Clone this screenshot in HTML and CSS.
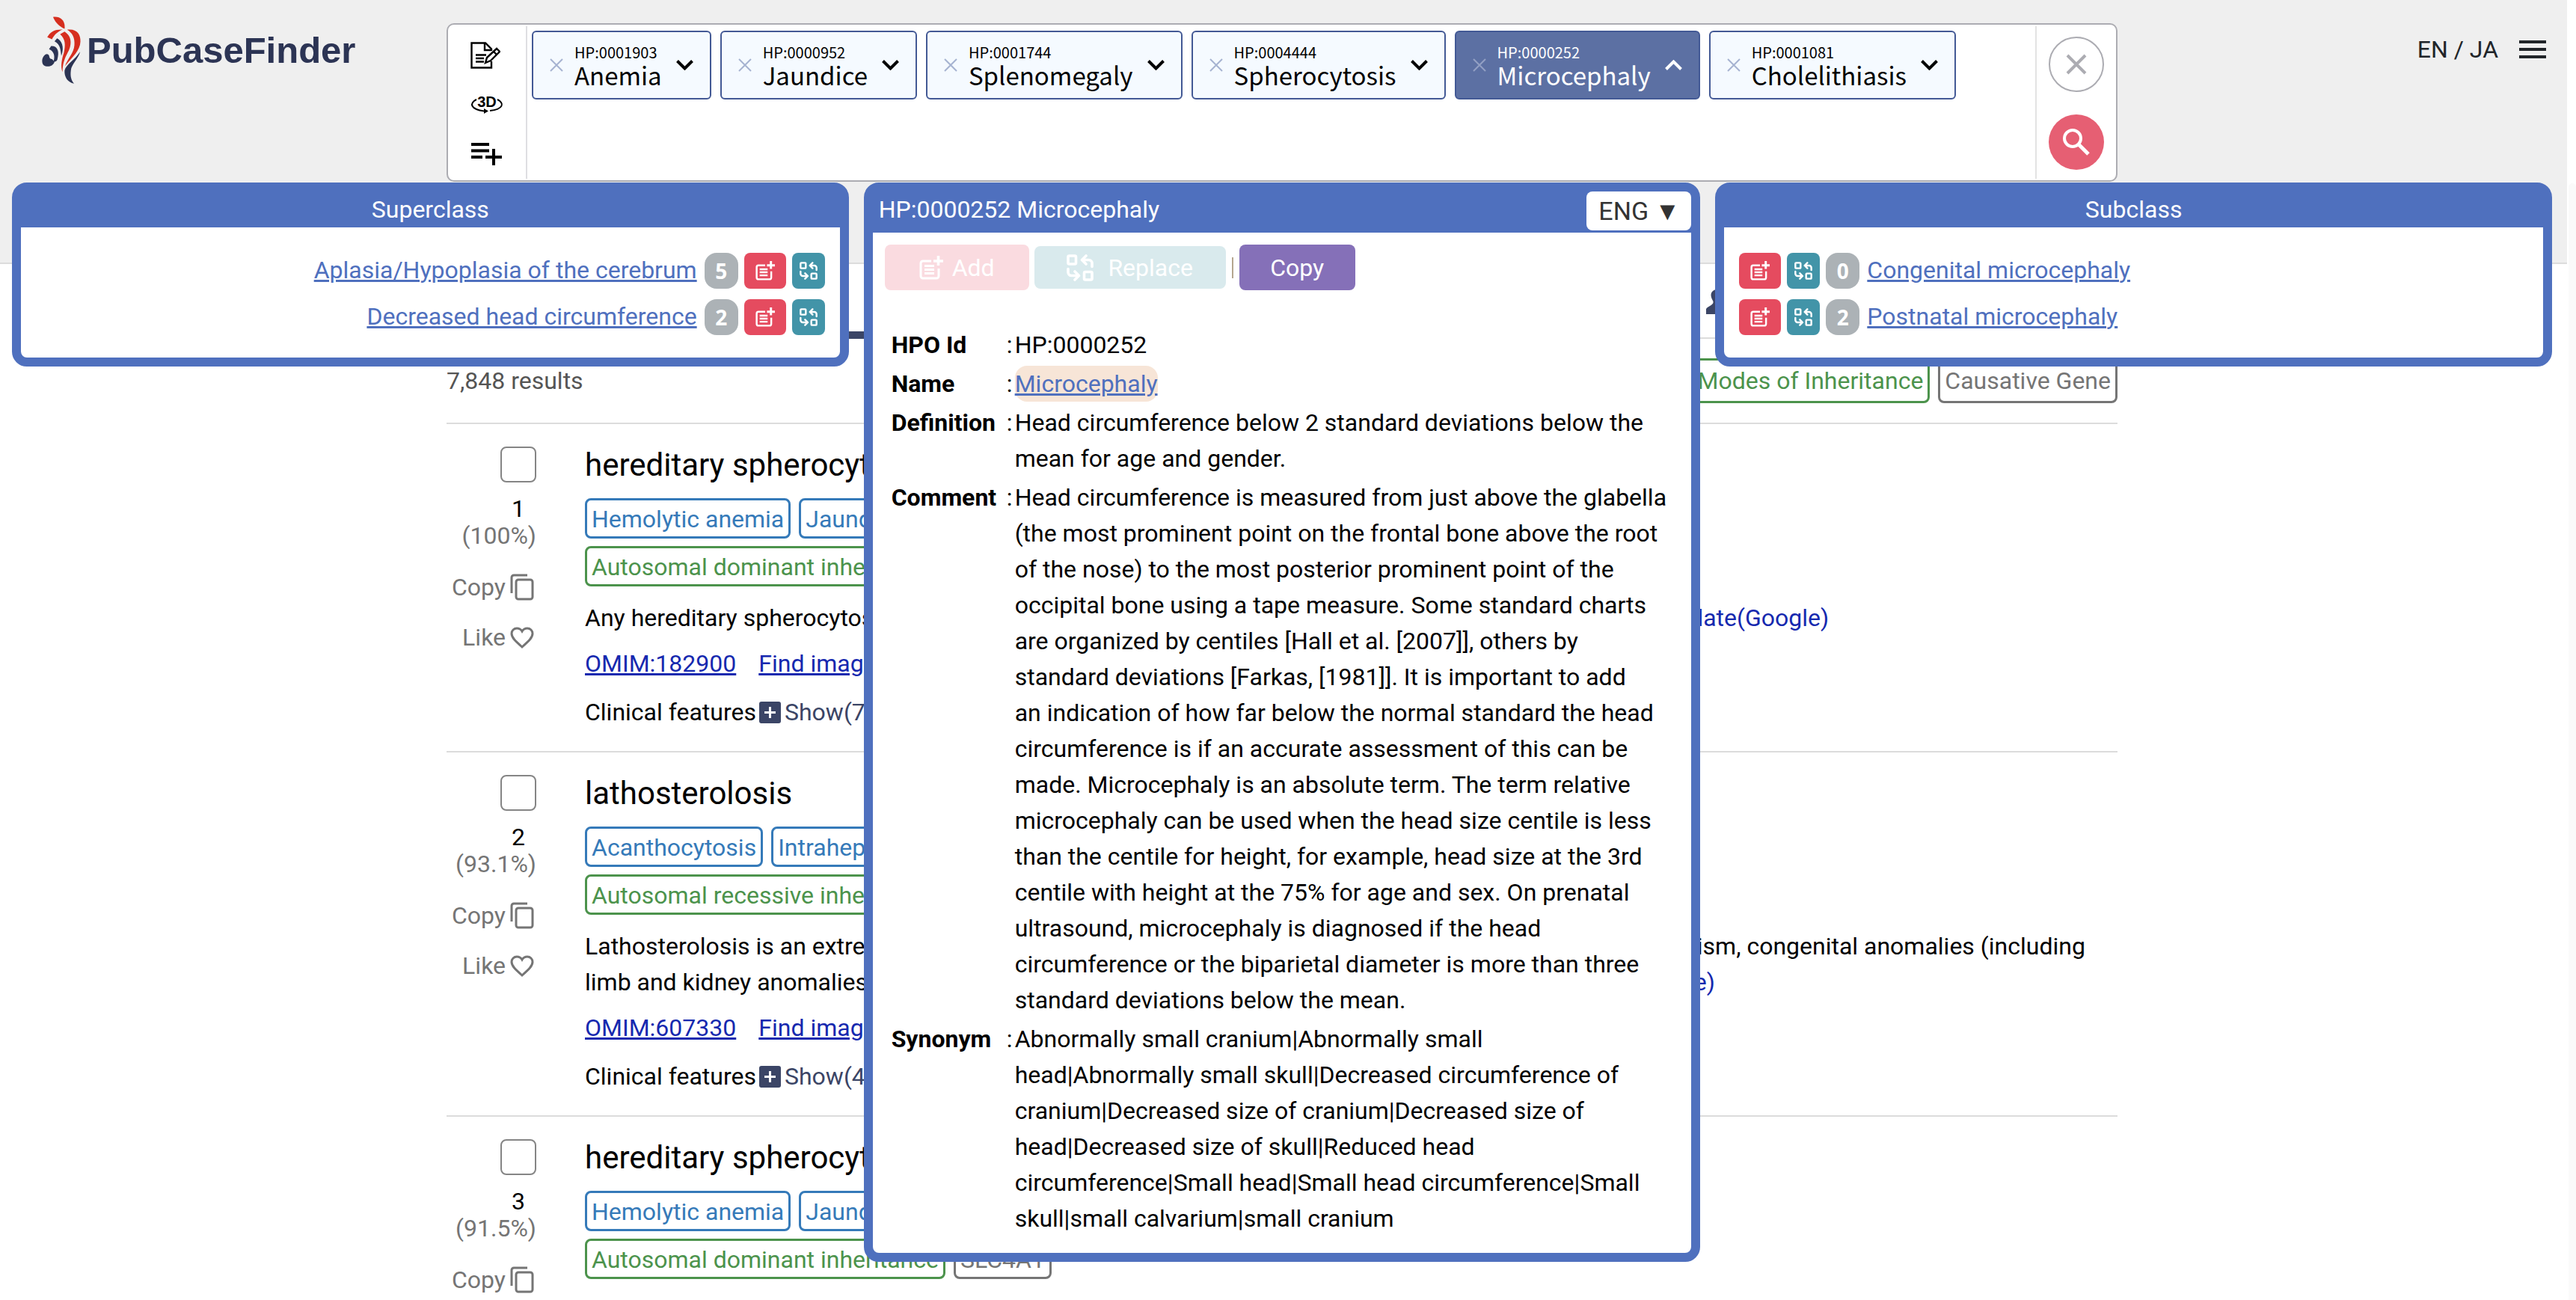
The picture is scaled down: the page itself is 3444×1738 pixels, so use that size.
FILE: index.html
```html
<!DOCTYPE html>
<html lang="en">
<head>
<meta charset="utf-8">
<title>PubCaseFinder</title>
<link rel="stylesheet" href="styles.css">
</head>
<body>
<svg class="sprite" aria-hidden="true">
  <symbol id="i-x" viewBox="0 0 18 18"><path d="M1 1l16 16M17 1L1 17" fill="none" stroke="currentColor" stroke-width="2"/></symbol>
  <symbol id="i-down" viewBox="0 0 23 14"><path d="M1.500 1.500l10 10 10-10" fill="none" stroke="currentColor" stroke-width="4"/></symbol>
  <symbol id="i-up" viewBox="0 0 23 14"><path d="M1.500 12.500l10-10 10 10" fill="none" stroke="currentColor" stroke-width="4"/></symbol>
  <symbol id="i-add" viewBox="0 0 32 32"><path d="M16 7H5a3 3 0 0 0-3 3v17a3 3 0 0 0 3 3h18a3 3 0 0 0 3-3V17" fill="none" stroke="currentColor" stroke-width="3"/><path d="M25.500 0v13M19 7h13" fill="none" stroke="currentColor" stroke-width="3.600"/><path d="M7 13.500h13M7 18.500h13M7 23.500h13" fill="none" stroke="currentColor" stroke-width="3"/></symbol>
  <symbol id="i-swap" viewBox="0 0 36 36"><g fill="none" stroke="currentColor" stroke-width="3.600" stroke-linecap="round" stroke-linejoin="round"><rect x="2" y="2" width="10.500" height="11" rx="1.500"/><rect x="23.500" y="23.500" width="10.500" height="10.500" rx="1.500"/><path d="M26 2l-5.500 5.500L26 13M21 7.500h8.500A4.500 4.500 0 0 1 34 12v4.500M2 19.500V24a4.500 4.500 0 0 0 4.500 4.500H15M11 23l5.500 5.500L11 34"/></g></symbol>
  <symbol id="i-copy" viewBox="0 0 32 36"><path d="M2 26V5a3 3 0 0 1 3-3h18M11 8h16a3 3 0 0 1 3 3v20a3 3 0 0 1-3 3H11a3 3 0 0 1-3-3V11a3 3 0 0 1 3-3z" fill="none" stroke="currentColor" stroke-width="3"/></symbol>
  <symbol id="i-heart" viewBox="0 0 32 29"><path d="M16 27C7 19 2 14.500 2 9a7 7 0 0 1 7-7c3 0 5.500 1.500 7 4 1.500-2.500 4-4 7-4a7 7 0 0 1 7 7c0 5.500-5 10-14 18z" fill="none" stroke="currentColor" stroke-width="3"/></symbol>
  <symbol id="i-plus" viewBox="0 0 29 29"><rect width="29" height="29" rx="3" fill="#3b4566"/><path d="M14.500 7v15M7 14.500h15" stroke="#fff" stroke-width="3"/></symbol>
</svg>

<div class="page">
  <header class="top">
    <a class="logo" href="#">
      <svg viewBox="48 35 154 268" width="52" height="90" aria-hidden="true">
        <g fill="#d62e1f">
          <path d="M92 37c28-4 50 13 46 47-19-8-35-22-46-47z"/>
          <path d="M148 88c42-5 54 22 53 47-1 36-32 62-61 97 10-28 35-52 37-82 3-30-9-51-29-62z"/>
          <path d="M120 106l18-11c22 15 28 35 22 60-5 25-30 45-30 101-10-21-2-56 5-76 7-30 7-55-15-74z"/>
          <path d="M130 87c-30-1-50 8-61 31l19 8c7-16 22-31 42-39z"/>
        </g>
        <g fill="#2c3454">
          <path d="M108 122c17 8 31 32 17 70-3-22-3-46-27-58z"/>
          <path d="M84 153c27-1 34 22 25 54-4 9-11 10-15 6 6-17 4-39-18-48z"/>
          <path d="M68 185c14 1 4 20 20 20l10 10c-6 18-22 21-36 18-17-5-16-28-7-40 5-6 9-8 13-8z"/>
          <path d="M200 175c-8 30-35 50-37 75-3 25 2 40 13 52-26-4-40-27-38-52 4-22 42-43 62-75z"/>
        </g>
      </svg>
      <span>PubCaseFinder</span>
    </a>

    <form class="search">
      <div class="tools">
        <button type="button" aria-label="Enter text"><svg width="40" height="36" viewBox="0 0 40 36"><g fill="none" stroke="#000" stroke-width="2.400"><path d="M28 26v8.500H1.500v-33H20l8 8V12"/><path d="M19 2v9h9M7 17.500h14M7 22h11M7 26.500h11"/><path d="M20 28l2-7L35 9l4 4-12 12z" fill="#fff"/><path d="M31 13l4 4"/></g></svg></button>
        <button type="button" aria-label="3D body"><svg width="44" height="32" viewBox="0 -4 44 32"><text x="22" y="15" text-anchor="middle" class="three-d">3D</text><path d="M8 5C-2 10 0 18 18 20.500M36 5c10 5 8 13-10 15" fill="none" stroke="#000" stroke-width="2"/><path d="M18 17l6 3.500-6 3.500z"/></svg></button>
        <button type="button" aria-label="Add list"><svg width="42" height="38" viewBox="0 -6 42 38"><path d="M1 3h24M1 11.500h24M1 20h15M20 20h22M31 9v22" stroke="#000" stroke-width="4"/></svg></button>
      </div>
      <div class="chips">
        <div class="chip"><button type="button" aria-label="Remove"><svg width="18" height="18"><use href="#i-x"/></svg></button><span class="chip-text"><small>HP:0001903</small>Anemia</span><button type="button" aria-label="Open"><svg width="23" height="14"><use href="#i-down"/></svg></button></div>
        <div class="chip"><button type="button" aria-label="Remove"><svg width="18" height="18"><use href="#i-x"/></svg></button><span class="chip-text"><small>HP:0000952</small>Jaundice</span><button type="button" aria-label="Open"><svg width="23" height="14"><use href="#i-down"/></svg></button></div>
        <div class="chip"><button type="button" aria-label="Remove"><svg width="18" height="18"><use href="#i-x"/></svg></button><span class="chip-text"><small>HP:0001744</small>Splenomegaly</span><button type="button" aria-label="Open"><svg width="23" height="14"><use href="#i-down"/></svg></button></div>
        <div class="chip"><button type="button" aria-label="Remove"><svg width="18" height="18"><use href="#i-x"/></svg></button><span class="chip-text"><small>HP:0004444</small>Spherocytosis</span><button type="button" aria-label="Open"><svg width="23" height="14"><use href="#i-down"/></svg></button></div>
        <div class="chip active"><button type="button" aria-label="Remove"><svg width="18" height="18"><use href="#i-x"/></svg></button><span class="chip-text"><small>HP:0000252</small>Microcephaly</span><button type="button" aria-label="Close"><svg width="23" height="14"><use href="#i-up"/></svg></button></div>
        <div class="chip"><button type="button" aria-label="Remove"><svg width="18" height="18"><use href="#i-x"/></svg></button><span class="chip-text"><small>HP:0001081</small>Cholelithiasis</span><button type="button" aria-label="Open"><svg width="23" height="14"><use href="#i-down"/></svg></button></div>
        <input type="text" aria-label="Signs and symptoms">
      </div>
      <div class="go">
        <button type="reset" class="round clear" aria-label="Clear"><svg width="28" height="28" viewBox="0 0 28 28"><path d="M2 2l24 24M26 2L2 26" stroke="#acacb2" stroke-width="4"/></svg></button>
        <button type="submit" class="round find" aria-label="Search"><svg width="36" height="36" viewBox="0 0 36 36"><circle cx="13" cy="13" r="11" fill="none" stroke="#fff" stroke-width="4"/><path d="M21 21l13 13" stroke="#fff" stroke-width="5"/></svg></button>
      </div>
    </form>

    <nav class="lang">
      <a href="#">EN / JA</a>
      <button type="button" aria-label="Menu"><svg width="36" height="24" viewBox="0 0 36 24"><path d="M0 2h36M0 12h36M0 22h36" stroke="#212529" stroke-width="4"/></svg></button>
    </nav>
  </header>

  <main class="content">
    <nav class="tabs">
      <a class="tab on" href="#">Rare Diseases</a>
      <a class="tab" href="#">Genetic Diseases</a>
      <a class="tab" href="#">Genes</a>
      <a class="tab" href="#"><svg width="40" height="34" viewBox="0 0 40 34"><path d="M20 0c6 0 9 4 8 10-1 4-2 6-2 8 0 4 12 5 14 9v7H0v-7c2-4 12-5 9-11C4 8 6 0 20 0z" fill="#3b4566"/></svg>Case Reports</a>
    </nav>
    <div class="results-bar">
      <p>7,848 results</p>
      <div class="filters">
        <button type="button" class="tag green">Modes of Inheritance</button>
        <button type="button" class="tag grey">Causative Gene</button>
      </div>
    </div>

    <article class="result">
      <div class="side">
        <input type="checkbox" aria-label="Select result 1">
        <span class="rank">1</span><span class="score">(100%)</span>
        <button type="button">Copy<svg width="32" height="36"><use href="#i-copy"/></svg></button>
        <button type="button">Like<svg width="32" height="29"><use href="#i-heart"/></svg></button>
      </div>
      <div class="body">
        <h2>hereditary spherocytosis type 1</h2>
        <div class="tags"><span class="tag blue">Hemolytic anemia</span><span class="tag blue">Jaundice</span></div>
        <div class="tags"><span class="tag green">Autosomal dominant inheritance</span><span class="tag grey">ANK1</span></div>
        <p class="desc">Any hereditary spherocytosis in which the cause of the disease is a mutation in the ANK1 gene. <a href="#">Translate(Google)</a></p>
        <p class="links"><a href="#">OMIM:182900</a><a href="#">Find images</a></p>
        <p class="features">Clinical features<button type="button"><svg width="29" height="29"><use href="#i-plus"/></svg>Show(73)</button></p>
      </div>
    </article>

    <article class="result">
      <div class="side">
        <input type="checkbox" aria-label="Select result 2">
        <span class="rank">2</span><span class="score">(93.1%)</span>
        <button type="button">Copy<svg width="32" height="36"><use href="#i-copy"/></svg></button>
        <button type="button">Like<svg width="32" height="29"><use href="#i-heart"/></svg></button>
      </div>
      <div class="body">
        <h2>lathosterolosis</h2>
        <div class="tags"><span class="tag blue">Acanthocytosis</span><span class="tag blue">Intrahepatic cholestasis</span></div>
        <div class="tags"><span class="tag green">Autosomal recessive inheritance</span><span class="tag grey">SC5D</span></div>
        <p class="desc">Lathosterolosis is an extremely rare inborn errors of sterol biosynthesis characterized by facial dysmorphism, congenital anomalies (including limb and kidney anomalies), failure to thrive, developmental delays and liver disease. <a href="#">Translate(Google)</a></p>
        <p class="links"><a href="#">OMIM:607330</a><a href="#">Find images</a></p>
        <p class="features">Clinical features<button type="button"><svg width="29" height="29"><use href="#i-plus"/></svg>Show(47)</button></p>
      </div>
    </article>

    <article class="result">
      <div class="side">
        <input type="checkbox" aria-label="Select result 3">
        <span class="rank">3</span><span class="score">(91.5%)</span>
        <button type="button">Copy<svg width="32" height="36"><use href="#i-copy"/></svg></button>
      </div>
      <div class="body">
        <h2>hereditary spherocytosis type 4</h2>
        <div class="tags"><span class="tag blue">Hemolytic anemia</span><span class="tag blue">Jaundice</span></div>
        <div class="tags"><span class="tag green">Autosomal dominant inheritance</span><span class="tag grey">SLC4A1</span></div>
      </div>
    </article>
  </main>

  <div class="popup">
    <section class="panel super">
      <h3>Superclass</h3>
      <ul>
        <li><a href="#">Aplasia/Hypoplasia of the cerebrum</a><b class="count">5</b><button type="button" class="red" aria-label="Add"><svg width="26" height="26"><use href="#i-add"/></svg></button><button type="button" class="teal" aria-label="Replace"><svg width="24" height="24"><use href="#i-swap"/></svg></button></li>
        <li><a href="#">Decreased head circumference</a><b class="count">2</b><button type="button" class="red" aria-label="Add"><svg width="26" height="26"><use href="#i-add"/></svg></button><button type="button" class="teal" aria-label="Replace"><svg width="24" height="24"><use href="#i-swap"/></svg></button></li>
      </ul>
    </section>

    <section class="panel detail">
      <div class="detail-head">
        <h3>HP:0000252 Microcephaly</h3>
        <select aria-label="Language"><option>ENG ▼</option></select>
      </div>
      <div class="actions">
        <button type="button" class="add" disabled><svg width="32" height="32"><use href="#i-add"/></svg>Add</button>
        <button type="button" class="replace" disabled><svg width="36" height="36"><use href="#i-swap"/></svg>Replace</button>
        <span class="bar"></span>
        <button type="button" class="copy">Copy</button>
      </div>
      <table>
        <tr><th scope="row">HPO Id</th><td class="colon">:</td><td>HP:0000252</td></tr>
        <tr><th scope="row">Name</th><td class="colon">:</td><td><a class="name" href="#">Microcephaly</a></td></tr>
        <tr><th scope="row">Definition</th><td class="colon">:</td><td>Head circumference below 2 standard deviations below the mean for age and gender.</td></tr>
        <tr><th scope="row">Comment</th><td class="colon">:</td><td>Head circumference is measured from just above the glabella (the most prominent point on the frontal bone above the root of the nose) to the most posterior prominent point of the occipital bone using a tape measure. Some standard charts are organized by centiles [Hall et al. [2007]], others by<br>standard deviations [Farkas, [1981]]. It is important to add<br>an indication of how far below the normal standard the head circumference is if an accurate assessment of this can be<br>made. Microcephaly is an absolute term. The term relative microcephaly can be used when the head size centile is less than the centile for height, for example, head size at the 3rd centile with height at the 75% for age and sex. On prenatal ultrasound, microcephaly is diagnosed if the head circumference or the biparietal diameter is more than three standard deviations below the mean.</td></tr>
        <tr><th scope="row">Synonym</th><td class="colon">:</td><td>Abnormally small cranium|Abnormally small<br>head|Abnormally small skull|Decreased circumference of cranium|Decreased size of cranium|Decreased size of<br>head|Decreased size of skull|Reduced head<br>circumference|Small head|Small head circumference|Small skull|small calvarium|small cranium</td></tr>
      </table>
    </section>

    <section class="panel sub">
      <h3>Subclass</h3>
      <ul>
        <li><button type="button" class="red" aria-label="Add"><svg width="26" height="26"><use href="#i-add"/></svg></button><button type="button" class="teal" aria-label="Replace"><svg width="24" height="24"><use href="#i-swap"/></svg></button><b class="count">0</b><a href="#">Congenital microcephaly</a></li>
        <li><button type="button" class="red" aria-label="Add"><svg width="26" height="26"><use href="#i-add"/></svg></button><button type="button" class="teal" aria-label="Replace"><svg width="24" height="24"><use href="#i-swap"/></svg></button><b class="count">2</b><a href="#">Postnatal microcephaly</a></li>
      </ul>
    </section>
  </div>
</div>
</body>
</html>
```
FILE: styles.css
```css
* { box-sizing: border-box; }
body {
  margin: 0;
  background: #fff;
  color: #000;
  font: 32px/48px Roboto, "Noto Sans", sans-serif;
}
h2, h3, p, ul { margin: 0; padding: 0; font-weight: 400; }
ul { list-style: none; }
svg { display: block; flex: none; }
button, input, select { font: inherit; color: inherit; }
button { border: 0; padding: 0; background: none; }
.sprite { display: none; }

.page {
  position: relative;
  height: 100vh;
  overflow: hidden;
  padding-right: 12px;
}
/* scroll thumb */
.page::after {
  content: "";
  position: absolute;
  top: 245px;
  right: 0;
  bottom: 0;
  width: 10px;
  border-radius: 8px 8px 0 0;
  background: #fafafa;
}

/* header */
.top {
  display: grid;
  grid-template-columns: 597px 1fr 601px;
  align-items: start;
  padding: 31px 0 108px;
  background: #efefef;
  border-bottom: 2px solid #dcdcdc;
}
.logo {
  display: flex;
  align-items: center;
  gap: 8px;
  margin-top: -9px;
  padding-left: 56px;
  color: #2c3454;
  font: bold 49px/90px "Liberation Sans", sans-serif;
  text-decoration: none;
}
.lang {
  display: flex;
  justify-content: flex-end;
  align-items: center;
  gap: 28px;
  padding: 11px 28px 0 0;
  color: #212529;
}
.lang a { color: inherit; text-decoration: none; }

.search {
  display: grid;
  grid-template-columns: 106px 1fr 108px;
  height: 212px;
  padding: 2px 0;
  background: #fff;
  border: 2px solid #acacb2;
  border-radius: 10px;
}
.tools {
  display: grid;
  grid-template-rows: 78px 54px 72px;
  justify-content: center;
  align-items: center;
  border-right: 2px solid #dfdfe2;
}
.three-d { font: bold 20px "Liberation Sans", sans-serif; }
.chips {
  display: flex;
  flex-wrap: wrap;
  align-content: flex-start;
  gap: 12px;
  padding: 6px;
}
.chips input { flex: 1; border: 0; background: none; min-width: 40px; }
.chip {
  display: flex;
  align-items: center;
  height: 92px;
  padding: 0 22px;
  background: #f5faff;
  border: 2px solid #435995;
  border-radius: 6px;
}
.chip button:first-child { color: #a6b3d1; }
.chip-text {
  margin: 0 19px 0 15px;
  font: 33px/34px "Noto Sans CJK JP", sans-serif;
}
.chip-text small { display: block; font-size: 20px; line-height: 26px; }
.chip.active { background: #5c70a3; color: #fff; }
.chip.active button:first-child { color: #93a0c4; }
.go {
  display: flex;
  flex-direction: column;
  align-items: center;
  gap: 30px;
  padding-top: 14px;
  border-left: 2px solid #e3e3e3;
}
.round {
  display: grid;
  place-items: center;
  width: 74px;
  height: 74px;
  border-radius: 50%;
}
.clear { border: 2px solid #acacb2; }
.find { background: #e65f73; }

/* results */
.content { padding: 0 601px 0 597px; }
.tabs {
  display: grid;
  grid-template-columns: repeat(4, 1fr);
  height: 100px;
  border-bottom: 2px solid #dcdcdc;
}
.tab {
  display: flex;
  align-items: center;
  gap: 12px;
  height: 100px;
  padding-left: 8px;
  color: #3b4566;
  text-decoration: none;
}
.tab.on { border-bottom: 10px solid #3b4566; }
.results-bar {
  display: flex;
  justify-content: space-between;
  align-items: center;
  padding: 26px 0;
  border-bottom: 2px solid #dcdcdc;
}
.results-bar p { color: #555; }
.filters, .tags { display: flex; gap: 11px; }
.filters .tag { height: 60px; line-height: 54px; }
.tag {
  height: 54px;
  padding: 0 6px;
  border: 3px solid;
  border-radius: 8px;
  white-space: nowrap;
  line-height: 50px;
}
.blue { color: #357ab9; }
.green { color: #4c934c; }
.grey { color: #757575; }

.result {
  display: grid;
  grid-template-columns: 120px 1fr;
  gap: 65px;
  padding: 27px 0 28px;
  border-bottom: 2px solid #dcdcdc;
}
.side {
  display: flex;
  flex-direction: column;
  align-items: flex-end;
  padding-top: 3px;
  color: #757575;
}
.side input {
  appearance: none;
  width: 48px;
  height: 48px;
  margin: 0;
  border: 2px solid #858585;
  border-radius: 8px;
}
.rank { width: 48px; margin-top: 17px; text-align: center; line-height: 36px; color: #000; }
.score { line-height: 36px; margin-bottom: 27px; }
.side button { display: flex; align-items: center; gap: 6px; margin: 0 3px 19px 0; }
.body h2 { margin-bottom: 16px; font-size: 42px; line-height: 56px; }
.tags { margin-bottom: 10px; }
.desc { margin-top: 18px; }
.desc a, .links a { color: #1629af; }
.desc a { margin-left: 54px; text-decoration: none; }
.links { display: flex; gap: 30px; margin: 13px 0 17px; }
.features { display: flex; gap: 4px; }
.features button { display: flex; align-items: center; gap: 5px; color: #3b4566; }

/* term popup */
.popup {
  position: absolute;
  z-index: 1;
  top: 244px;
  left: 16px;
  right: 32px;
  display: grid;
  grid-template-columns: repeat(3, minmax(0, 1fr));
  align-items: start;
  gap: 20px;
}
.panel {
  background: #fff;
  border: 12px solid #4f70be;
  border-radius: 20px;
}
.panel h3 { background: #4f70be; color: #fff; font-size: 32px; text-align: center; }
.panel a { color: #4f70be; }
.panel ul { display: grid; gap: 14px; padding: 34px 20px 30px; }
.panel li { display: flex; align-items: center; gap: 8px; height: 48px; }
.panel li a { margin: 0 2px 3px; }
.super li { justify-content: flex-end; }
.panel li button { display: grid; place-items: center; height: 48px; border-radius: 8px; color: #fff; }
.panel li .red { width: 56px; background: #e54b5f; }
.panel li .teal { width: 44px; background: #4294a8; }
.count {
  width: 45px;
  height: 48px;
  border-radius: 16px;
  background: #acb2b6;
  color: #fff;
  font: bold 28px/48px "Noto Sans", sans-serif;
  text-align: center;
}
.detail-head {
  display: flex;
  justify-content: space-between;
  height: 55px;
  padding-left: 8px;
  background: #4f70be;
}
.detail-head select {
  appearance: none;
  width: 140px;
  height: 52px;
  padding: 0 16px;
  border: 0;
  border-radius: 8px;
  background: #fff;
  color: #333;
  font-size: 34px;
}
.actions { display: flex; align-items: center; padding: 16px; }
.actions button {
  display: flex;
  justify-content: center;
  align-items: center;
  height: 61px;
  border-radius: 8px;
  color: #fff;
}
.actions .add { width: 193px; gap: 12px; background: #fadbe0; }
.actions .replace { width: 256px; height: 57px; margin-left: 7px; gap: 19px; background: #d9eaed; }
.actions .copy { width: 155px; background: #8570b8; }
.bar { width: 2px; height: 28px; margin: 0 8px; background: #b5a68f; }
.detail table { margin: 31px 20px 20px 25px; border-collapse: collapse; }
.detail th, .detail td { padding: 2px 0; text-align: left; vertical-align: top; }
.detail th { width: 150px; min-width: 150px; }
.detail .colon { width: 15px; min-width: 15px; padding-left: 4px; }
.name { padding: 5px 0; border-radius: 16px; background: #f7e5d7; }
```
